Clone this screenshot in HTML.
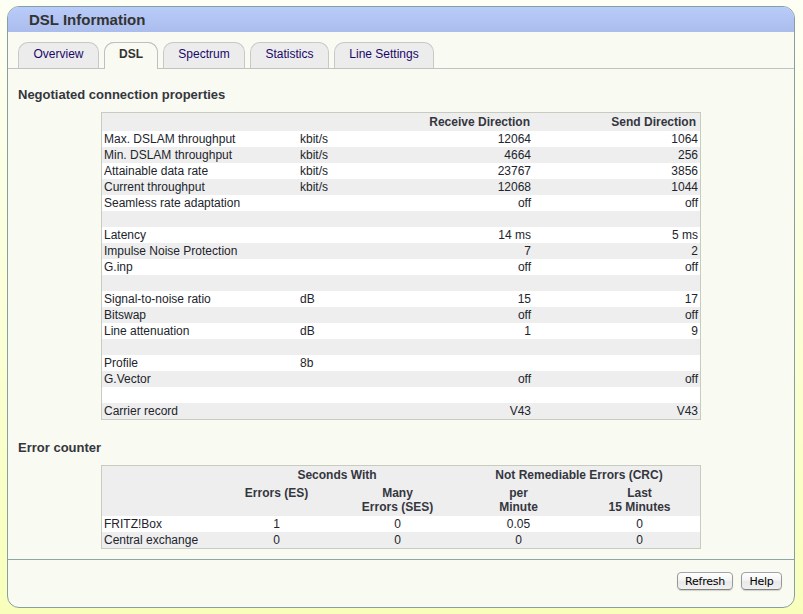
<!DOCTYPE html>
<html>
<head>
<meta charset="utf-8">
<title>DSL Information</title>
<style>
html,body{margin:0;padding:0;}
body{width:803px;height:614px;overflow:hidden;background:linear-gradient(to bottom,#fefff4 0%,#f9ffbb 100%);font-family:"Liberation Sans",Arial,Helvetica,sans-serif;font-size:12px;line-height:14px;color:#22242c;position:relative;}
#box{position:absolute;left:7px;top:6px;width:786px;height:600px;border:1px solid #85a0a0;border-radius:12px;background:#f9faf1;overflow:hidden;}
#hdr{position:absolute;left:0;top:0;right:0;height:25px;background:linear-gradient(to bottom,#b8cbf9,#abbdec);}
#hdr h1{margin:0;position:absolute;left:21px;top:4px;font-size:15px;line-height:18px;font-weight:bold;color:#333;}
#tabline{position:absolute;left:0;right:0;top:61px;height:1px;background:#c2c2c2;}
.tab{position:absolute;top:35px;height:26px;box-sizing:border-box;border:1px solid #c8c8c8;border-bottom:none;border-radius:10px 10px 0 0;background:#ececec;color:#1a0868;text-align:center;line-height:22px;font-size:12px;}
.tab.act{background:#f9faf1;color:#333;font-weight:bold;height:27px;border-color:#bcc0c4;}
h2{position:absolute;margin:0;left:10px;font-size:13px;line-height:16px;font-weight:bold;color:#34363e;}
table{position:absolute;left:93px;border-collapse:separate;border-spacing:0;border:1px solid #c8cbc0;width:600px;table-layout:fixed;background:#fff;}
td{padding:1px 2px;height:14px;line-height:14px;white-space:nowrap;}
th{padding:2px 4px 2px 2px;line-height:14px;font-weight:bold;color:#34363e;}
tr.g td,tr.g th{background:#eee;}
.r{text-align:right;}
.c{text-align:center;}
th.c{padding:2px;}
#sep{position:absolute;left:0;right:0;top:552px;height:1px;background:#8ea6a6;}
.btn{position:absolute;top:565px;height:18px;box-sizing:border-box;border:1px solid #999;border-color:#a4a4a4 #999 #828282;border-radius:4.5px;background:linear-gradient(to bottom,#fff 0%,#f4f4f4 45%,#e9e9e9 55%,#f0f0f0 100%);box-shadow:0 1px 1px rgba(0,0,0,.16);font-family:"DejaVu Sans","Liberation Sans",sans-serif;font-size:11px;line-height:17px;letter-spacing:-0.25px;text-align:center;color:#000;}
</style>
</head>
<body>
<div id="box">
<div id="hdr"><h1>DSL Information</h1></div>
<div class="tab" style="left:10px;width:81px;">Overview</div>
<div class="tab act" style="left:96px;width:54px;">DSL</div>
<div class="tab" style="left:155px;width:82px;">Spectrum</div>
<div class="tab" style="left:242px;width:79px;">Statistics</div>
<div class="tab" style="left:326px;width:100px;">Line Settings</div>
<div id="tabline"></div>
<div class="tab act" style="left:96px;width:54px;">DSL</div>

<h2 style="top:80px;">Negotiated connection properties</h2>
<table style="top:105px;">
<colgroup><col style="width:196px"><col style="width:70px"><col style="width:165px"><col style="width:167px"></colgroup>
<tr class="g"><th></th><th></th><th class="r" style="padding-right:3px">Receive Direction</th><th class="r">Send Direction</th></tr>
<tr><td>Max. DSLAM throughput</td><td>kbit/s</td><td class="r">12064</td><td class="r">1064</td></tr>
<tr class="g"><td>Min. DSLAM throughput</td><td>kbit/s</td><td class="r">4664</td><td class="r">256</td></tr>
<tr><td>Attainable data rate</td><td>kbit/s</td><td class="r">23767</td><td class="r">3856</td></tr>
<tr class="g"><td>Current throughput</td><td>kbit/s</td><td class="r">12068</td><td class="r">1044</td></tr>
<tr><td>Seamless rate adaptation</td><td></td><td class="r">off</td><td class="r">off</td></tr>
<tr class="g"><td></td><td></td><td></td><td></td></tr>
<tr><td>Latency</td><td></td><td class="r">14 ms</td><td class="r">5 ms</td></tr>
<tr class="g"><td>Impulse Noise Protection</td><td></td><td class="r">7</td><td class="r">2</td></tr>
<tr><td>G.inp</td><td></td><td class="r">off</td><td class="r">off</td></tr>
<tr class="g"><td></td><td></td><td></td><td></td></tr>
<tr><td>Signal-to-noise ratio</td><td>dB</td><td class="r">15</td><td class="r">17</td></tr>
<tr class="g"><td>Bitswap</td><td></td><td class="r">off</td><td class="r">off</td></tr>
<tr><td>Line attenuation</td><td>dB</td><td class="r">1</td><td class="r">9</td></tr>
<tr class="g"><td></td><td></td><td></td><td></td></tr>
<tr><td>Profile</td><td>8b</td><td></td><td></td></tr>
<tr class="g"><td>G.Vector</td><td></td><td class="r">off</td><td class="r">off</td></tr>
<tr><td></td><td></td><td></td><td></td></tr>
<tr class="g"><td>Carrier record</td><td></td><td class="r">V43</td><td class="r">V43</td></tr>
</table>

<h2 style="top:433px;">Error counter</h2>
<table style="top:458px;">
<colgroup><col style="width:114px"><col style="width:121px"><col style="width:121px"><col style="width:121px"><col style="width:121px"></colgroup>
<tr class="g"><th></th><th class="c" colspan="2">Seconds With</th><th class="c" colspan="2">Not Remediable Errors (CRC)</th></tr>
<tr class="g"><th></th><th class="c" style="vertical-align:top">Errors (ES)</th><th class="c">Many<br>Errors (SES)</th><th class="c">per<br>Minute</th><th class="c">Last<br>15 Minutes</th></tr>
<tr><td>FRITZ!Box</td><td class="c">1</td><td class="c">0</td><td class="c">0.05</td><td class="c">0</td></tr>
<tr class="g"><td>Central exchange</td><td class="c">0</td><td class="c">0</td><td class="c">0</td><td class="c">0</td></tr>
</table>

<div id="sep"></div>
<div class="btn" style="left:669px;width:56px;">Refresh</div>
<div class="btn" style="left:733px;width:41px;">Help</div>
</div>
</body>
</html>
